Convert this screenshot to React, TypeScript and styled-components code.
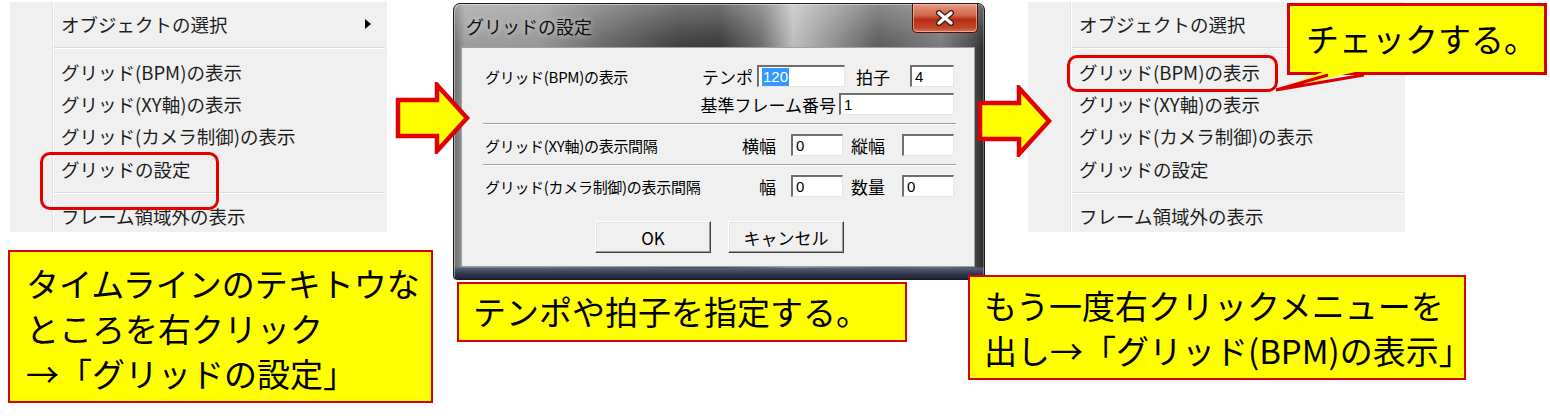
import React from 'react';
import styled, { createGlobalStyle } from 'styled-components';

const GlobalStyle = createGlobalStyle`
  html, body {
    margin: 0;
    padding: 0;
    background: #ffffff;
  }
  body {
    font-family: "Noto Sans CJK JP", "Noto Sans", sans-serif;
    color: #000;
  }
`;

const Page = styled.div`
  display: flex;
  align-items: flex-start;
  width: 1550px;
  height: 418px;
  padding-top: 2px;
  box-sizing: border-box;
  overflow: hidden;
  background: #fff;
`;

const Column = styled.div<{ $offset: number }>`
  position: relative;
  display: flex;
  flex-direction: column;
  align-items: flex-start;
  flex-shrink: 0;
  margin-left: ${p => p.$offset}px;
`;

/* ---------- context menu ---------- */

const MenuBox = styled.div<{ $indent: number }>`
  position: relative;
  display: flex;
  width: 377px;
  height: 230px;
  margin-left: ${p => p.$indent}px;
  background: #f0f0f0;
  overflow: hidden;
`;

const Gutter = styled.div`
  width: 42px;
  flex-shrink: 0;
  border-right: 1px solid #e2e3e3;
`;

const MenuList = styled.div`
  flex: 1;
  display: flex;
  flex-direction: column;
  padding-top: 6px;
  border-left: 1px solid #ffffff;
`;

const MenuItem = styled.div`
  display: flex;
  align-items: center;
  height: 33px;
  padding-left: 7px;
  font-size: 18.5px;
  color: #1e1e1e;
  white-space: nowrap;
`;

const SubArrow = styled.span`
  margin-left: auto;
  margin-right: 16px;
  width: 0;
  height: 0;
  border-left: 6px solid #000;
  border-top: 5px solid transparent;
  border-bottom: 5px solid transparent;
`;

const MenuSeparator = styled.div`
  height: 1px;
  margin: 7px 2px 7px 0;
  background: #dcdcdc;
  box-shadow: 0 1px 0 #ffffff;
`;

const Highlight = styled.div<{ $left: number; $top: number; $w: number; $h: number }>`
  position: absolute;
  left: ${p => p.$left}px;
  top: ${p => p.$top}px;
  width: ${p => p.$w}px;
  height: ${p => p.$h}px;
  box-sizing: border-box;
  border: 3px solid #e30000;
  border-radius: 10px;
`;

type Box = { left: number; top: number; w: number; h: number };

function ContextMenu({ indent, submenu, mark }: { indent: number; submenu: boolean; mark: Box }) {
  return (
    <MenuBox $indent={indent}>
      <Gutter />
      <MenuList>
        <MenuItem>
          オブジェクトの選択
          {submenu && <SubArrow />}
        </MenuItem>
        <MenuSeparator />
        <MenuItem>グリッド(BPM)の表示</MenuItem>
        <MenuItem>グリッド(XY軸)の表示</MenuItem>
        <MenuItem>グリッド(カメラ制御)の表示</MenuItem>
        <MenuItem>グリッドの設定</MenuItem>
        <MenuSeparator />
        <MenuItem>フレーム領域外の表示</MenuItem>
      </MenuList>
      <Highlight $left={mark.left} $top={mark.top} $w={mark.w} $h={mark.h} />
    </MenuBox>
  );
}

/* ---------- callouts & arrows ---------- */

const Callout = styled.div<{ $w: number; $h: number; $pad: string; $border: number; $mt?: number; $ml?: number }>`
  width: ${p => p.$w}px;
  height: ${p => p.$h}px;
  margin-top: ${p => p.$mt ?? 0}px;
  margin-left: ${p => p.$ml ?? 0}px;
  padding: ${p => p.$pad};
  box-sizing: border-box;
  background: #ffff00;
  border: ${p => p.$border}px solid #d80000;
  font-size: 33px;
  line-height: 45px;
  color: #000;
  white-space: nowrap;
  flex-shrink: 0;
`;

const FloatingCallout = styled(Callout)`
  position: absolute;
  left: 302px;
  top: 1px;
  z-index: 3;
`;

const Tail = styled.svg`
  position: absolute;
  left: 287px;
  top: 66px;
  z-index: 4;
`;

const ArrowWrap = styled.div<{ $left: number; $top: number }>`
  position: absolute;
  left: ${p => p.$left}px;
  top: ${p => p.$top}px;
  width: 76px;
  height: 72px;
  z-index: 5;
`;

function StepArrow({ left, top }: { left: number; top: number }) {
  return (
    <ArrowWrap $left={left} $top={top}>
      <svg width="76" height="72" viewBox="0 0 76 72">
        <polygon
          points="3,18 42,18 42,3 72,36 42,69 42,54 3,54"
          fill="#ffff00"
          stroke="#e00000"
          strokeWidth="4.5"
          strokeLinejoin="miter"
        />
      </svg>
    </ArrowWrap>
  );
}

/* ---------- dialog ---------- */

const Dialog = styled.div`
  position: relative;
  display: flex;
  flex-direction: column;
  width: 532px;
  height: 277px;
  margin-top: 1px;
  padding: 0 9px 12px 7px;
  box-sizing: border-box;
  border: 1px solid #1a1a1a;
  border-radius: 7px 7px 4px 4px;
  background:
    linear-gradient(to top, #1e2538 0px, #2f374d 5px, #59617a 11px, rgba(0, 0, 0, 0) 12px),
    linear-gradient(180deg, rgba(255, 255, 255, 0.28) 0%, rgba(255, 255, 255, 0.05) 12%, rgba(0, 0, 0, 0) 16%),
    linear-gradient(90deg, #6c6c6c 0%, #9c9c9c 2%, #969696 16%, #6a6a6a 28%, #414141 42%, #3a3a3a 50%, #6d6d6d 58%, #bdbdbd 64%, #9a9a9a 70%, #5d5d5d 80%, #7b7b7b 92%, #4a4a4a 98%, #2a2a2a 100%);
  box-shadow: inset 1px 1px 0 rgba(255, 255, 255, 0.45), inset -1px 0 0 rgba(255, 255, 255, 0.3);
  flex-shrink: 0;
`;

const TitleBar = styled.div`
  display: flex;
  align-items: center;
  height: 43px;
  flex-shrink: 0;
`;

const TitleText = styled.span`
  padding-left: 5px;
  font-size: 18px;
  color: #101010;
  text-shadow: 0 0 6px rgba(255, 255, 255, 0.7);
`;

const CloseButton = styled.div`
  align-self: flex-start;
  display: flex;
  align-items: center;
  justify-content: center;
  width: 66px;
  height: 29px;
  margin-left: auto;
  margin-right: -3px;
  box-sizing: border-box;
  border: 1px solid #4a1208;
  border-top: none;
  border-radius: 0 0 5px 5px;
  background: linear-gradient(180deg, #e39a86 0%, #d2664c 40%, #b52d14 55%, #c2462a 85%, #d8785a 100%);
  box-shadow: inset 0 0 0 1px rgba(255, 210, 190, 0.55);
`;

const Client = styled.div`
  display: flex;
  flex-direction: column;
  height: 220px;
  padding: 0 20px 0 23px;
  box-sizing: border-box;
  background: #f0f0f0;
  border: 1px solid #9aa2ad;
`;

const Row = styled.div<{ $mt: number }>`
  display: flex;
  align-items: center;
  height: 22px;
  margin-top: ${p => p.$mt}px;
  flex-shrink: 0;
`;

const RowLabel = styled.span`
  font-size: 15px;
  white-space: nowrap;
  letter-spacing: -0.3px;
`;

const Fields = styled.div<{ $gap: number }>`
  display: flex;
  align-items: center;
  gap: ${p => p.$gap}px;
  margin-left: auto;
`;

const Field = styled.div<{ $gap: number }>`
  display: flex;
  align-items: center;
  gap: ${p => p.$gap}px;
`;

const FieldLabel = styled.span`
  font-size: 17px;
  white-space: nowrap;
`;

const TextBox = styled.div<{ $w: number }>`
  display: flex;
  align-items: center;
  width: ${p => p.$w}px;
  height: 22px;
  padding-left: 3px;
  box-sizing: border-box;
  background: #ffffff;
  border-style: solid;
  border-width: 2px 1px 1px 2px;
  border-color: #6f6f6f #e6e6e6 #e6e6e6 #6f6f6f;
  font-family: "Liberation Sans", sans-serif;
  font-size: 15px;
  color: #000;
`;

const Selected = styled.span`
  background: #3399ff;
  color: #ffffff;
  padding: 0 1px;
  line-height: 18px;
`;

const DialogSeparator = styled.div`
  height: 1px;
  margin: 8px -2px 9px -2px;
  background: #a0a0a0;
  border-bottom: 1px solid #ffffff;
  flex-shrink: 0;
`;

const ButtonRow = styled.div`
  display: flex;
  justify-content: center;
  gap: 17px;
  margin-top: 24px;
`;

const PushButton = styled.div`
  display: flex;
  align-items: center;
  justify-content: center;
  width: 116px;
  height: 32px;
  box-sizing: border-box;
  border: 1px solid;
  border-color: #ffffff #404040 #404040 #ffffff;
  box-shadow: inset -1px -1px 0 #9a9a9a, inset 1px 1px 0 #e3e3e3;
  background: #f0f0f0;
  font-size: 17px;
  color: #000;
`;

function GridDialog() {
  return (
    <Dialog>
      <TitleBar>
        <TitleText>グリッドの設定</TitleText>
        <CloseButton>
          <svg width="20" height="16" viewBox="0 0 20 16">
            <path d="M4 3 L16 13 M16 3 L4 13" stroke="#4a1a10" strokeWidth="6" strokeLinecap="round" />
            <path d="M4 3 L16 13 M16 3 L4 13" stroke="#ffffff" strokeWidth="3.4" strokeLinecap="round" />
          </svg>
        </CloseButton>
      </TitleBar>
      <Client>
        <Row $mt={17}>
          <RowLabel>グリッド(BPM)の表示</RowLabel>
          <Fields $gap={11}>
            <Field $gap={4}>
              <FieldLabel>テンポ</FieldLabel>
              <TextBox $w={88}>
                <Selected>120</Selected>
              </TextBox>
            </Field>
            <Field $gap={20}>
              <FieldLabel>拍子</FieldLabel>
              <TextBox $w={44}>4</TextBox>
            </Field>
          </Fields>
        </Row>
        <Row $mt={6}>
          <Fields $gap={0}>
            <Field $gap={3}>
              <FieldLabel>基準フレーム番号</FieldLabel>
              <TextBox $w={115}>1</TextBox>
            </Field>
          </Fields>
        </Row>
        <DialogSeparator />
        <Row $mt={0}>
          <RowLabel>グリッド(XY軸)の表示間隔</RowLabel>
          <Fields $gap={8}>
            <Field $gap={15}>
              <FieldLabel>横幅</FieldLabel>
              <TextBox $w={52}>0</TextBox>
            </Field>
            <Field $gap={17}>
              <FieldLabel>縦幅</FieldLabel>
              <TextBox $w={52} />
            </Field>
          </Fields>
        </Row>
        <DialogSeparator />
        <Row $mt={0}>
          <RowLabel>グリッド(カメラ制御)の表示間隔</RowLabel>
          <Fields $gap={8}>
            <Field $gap={15}>
              <FieldLabel>幅</FieldLabel>
              <TextBox $w={52}>0</TextBox>
            </Field>
            <Field $gap={17}>
              <FieldLabel>数量</FieldLabel>
              <TextBox $w={52}>0</TextBox>
            </Field>
          </Fields>
        </Row>
        <ButtonRow>
          <PushButton>OK</PushButton>
          <PushButton>キャンセル</PushButton>
        </ButtonRow>
      </Client>
    </Dialog>
  );
}

export default function App() {
  return (
    <>
      <GlobalStyle />
      <Page>
        <Column $offset={8}>
          <ContextMenu indent={2} submenu mark={{ left: 30, top: 150, w: 179, h: 58 }} />
          <Callout $w={425} $h={153} $border={2} $pad="9px 0 0 16px" $mt={18}>
            タイムラインのテキトウな
            <br />
            ところを右クリック
            <br />
            →「グリッドの設定」
          </Callout>
        </Column>

        <Column $offset={20}>
          <GridDialog />
          <Callout $w={450} $h={60} $border={2} $pad="5px 0 0 14px" $mt={2} $ml={4}>
            テンポや拍子を指定する。
          </Callout>
          <StepArrow left={-58} top={80} />
        </Column>

        <Column $offset={0}>
          <ContextMenu indent={43} submenu={false} mark={{ left: 39, top: 53, w: 211, h: 37 }} />
          <Callout $w={498} $h={105} $border={2} $pad="6px 0 0 14px" $mt={43} $ml={-17}>
            もう一度右クリックメニューを
            <br />
            出し→「グリッド(BPM)の表示」
          </Callout>
          <FloatingCallout $w={260} $h={72} $border={3} $pad="10px 0 0 16px">
            チェックする。
          </FloatingCallout>
          <Tail width="100" height="30" viewBox="0 0 100 30">
            <polygon points="56,2 92,2 4,22" fill="#ffff00" />
            <polyline points="56,7 4,22 92,7" fill="none" stroke="#d80000" strokeWidth="3" strokeLinejoin="miter" />
          </Tail>
          <StepArrow left={-8} top={83} />
        </Column>
      </Page>
    </>
  );
}
